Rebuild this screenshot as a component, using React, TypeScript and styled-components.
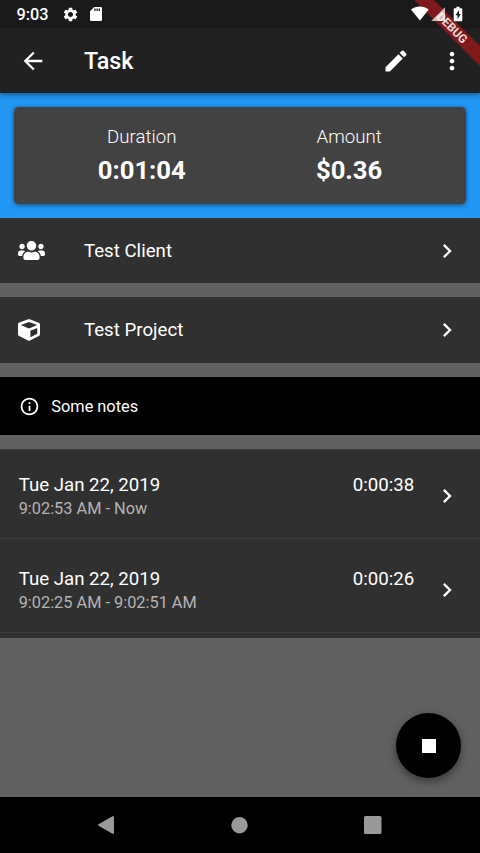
import React from "react";
import styled, { createGlobalStyle } from "styled-components";
import {
  MdArrowBack,
  MdChevronRight,
  MdEdit,
  MdInfoOutline,
  MdMoreVert,
  MdSettings,
} from "react-icons/md";
import { FaCube, FaUsers } from "react-icons/fa";

//#region STYLES
const GlobalStyle = createGlobalStyle`
  * {
    box-sizing: border-box;
  }
  body {
    margin: 0;
    font-family: Roboto, "Liberation Sans", sans-serif;
    color: #fff;
    background: #616161;
  }
  svg {
    display: block;
    flex-shrink: 0;
  }
  button {
    display: flex;
    padding: 0;
    border: 0;
    color: inherit;
    background: none;
  }
`;
const Screen = styled.div`
  position: relative;
  display: flex;
  flex-direction: column;
  width: 480px;
  height: 853px;
  overflow: hidden;
  background: #616161;
`;
const StatusBar = styled.div`
  display: flex;
  align-items: center;
  flex-shrink: 0;
  height: 28px;
  padding: 0 17px 0 16.5px;
  background: #1a1a1a;
`;
const Clock = styled.span`
  width: 45px;
  padding-top: 1px;
  font-size: 16.33px;
  font-weight: 500;
  line-height: 28px;
`;
const StatusIcons = styled.div<{ $right?: boolean }>`
  position: relative;
  z-index: 3;
  display: flex;
  align-items: center;
  gap: 11px;
  margin-left: ${({ $right }) => ($right ? "auto" : "0")};
`;
const AppBar = styled.header`
  position: relative;
  z-index: 1;
  display: flex;
  align-items: center;
  flex-shrink: 0;
  height: 65.33px;
  padding: 0 14px 0 18.67px;
  background: #212121;
  box-shadow: 0 2px 5px rgba(0, 0, 0, 0.4);
`;
const Title = styled.h1`
  flex: 1;
  margin: 0 0 0 37.33px;
  padding-top: 1px;
  font-size: 23.33px;
  font-weight: 500;
`;
const Actions = styled.div`
  display: flex;
  gap: 28px;
`;
const Summary = styled.section`
  flex-shrink: 0;
  height: 124.67px;
  padding: 14px;
  background: #2196f3;
`;
const Card = styled.div`
  display: flex;
  justify-content: space-around;
  height: 96.67px;
  padding: 18.67px;
  border-radius: 4.67px;
  background: #424242;
  box-shadow: 0 1px 4px rgba(0, 0, 0, 0.5);
`;
const Stat = styled.div`
  display: flex;
  flex-direction: column;
  align-items: center;
`;
const StatLabel = styled.span`
  font-size: 18.67px;
  font-weight: 300;
  line-height: 23px;
`;
const StatValue = styled.strong`
  margin-top: 5px;
  font-size: 25.67px;
  font-weight: 700;
  line-height: 32px;
`;
const Row = styled.div`
  display: flex;
  align-items: center;
  flex-shrink: 0;
  height: 65.33px;
  margin-bottom: 14px;
  padding: 0 18.67px 0 18px;
  font-size: 18.67px;
  background: #303030;
`;
const RowIcon = styled.span`
  width: 66px;
`;
const RowLabel = styled.span`
  flex: 1;
`;
const Notes = styled.div`
  display: flex;
  align-items: center;
  gap: 11.67px;
  flex-shrink: 0;
  height: 58.33px;
  margin-bottom: 14px;
  padding: 1px 18.67px 0;
  font-size: 16.33px;
  background: #000;
`;
const TimeList = styled.div`
  flex-shrink: 0;
  height: 188.67px;
  border-top: 1px solid #3a3a3a;
  background: #303030;
`;
const TimeItem = styled.div<{ $first?: boolean }>`
  display: flex;
  align-items: flex-start;
  height: ${({ $first }) => ($first ? "89px" : "94px")};
  padding: ${({ $first }) => ($first ? "24px" : "29px")} 18.67px 0;
  border-bottom: 1px solid #3c3c3c;
`;
const TimeText = styled.div`
  flex: 1;
`;
const TimeDate = styled.div`
  font-size: 18.67px;
  line-height: 22px;
`;
const TimeRange = styled.div`
  margin-top: 3.5px;
  font-size: 16.33px;
  line-height: 20px;
  color: #b4b4b4;
`;
const TimeTotal = styled.div`
  margin-right: 19.2px;
  font-size: 18.67px;
  line-height: 22px;
`;
const TimeArrow = styled.div`
  padding-top: 8px;
`;
const Fab = styled.button`
  position: absolute;
  right: 18.67px;
  bottom: 74.67px;
  align-items: center;
  justify-content: center;
  width: 65.33px;
  height: 65.33px;
  border-radius: 50%;
  background: #000;
  box-shadow: 0 4px 7px rgba(0, 0, 0, 0.32), 0 1px 14px rgba(0, 0, 0, 0.14);
`;
const StopIcon = styled.span`
  width: 14px;
  height: 14px;
  background: #fff;
`;
const NavBar = styled.nav`
  display: flex;
  align-items: center;
  justify-content: space-between;
  flex-shrink: 0;
  height: 56px;
  margin-top: auto;
  padding: 0 98.5px 0 97px;
  background: #000;
`;
const Banner = styled.div`
  position: absolute;
  z-index: 2;
  top: 21px;
  right: -28px;
  width: 112px;
  height: 14px;
  font-size: 11.9px;
  font-weight: 700;
  line-height: 14px;
  text-align: center;
  color: #e6dada;
  background: rgba(150, 24, 28, 0.82);
  transform: rotate(45deg);
`;
//#endregion

const times = [
  { date: "Tue Jan 22, 2019", range: "9:02:53 AM - Now", total: "0:00:38" },
  {
    date: "Tue Jan 22, 2019",
    range: "9:02:25 AM - 9:02:51 AM",
    total: "0:00:26",
  },
];

const SdIcon = () => (
  <svg width="12" height="14" viewBox="0 0 12 14">
    <path
      fill="#fff"
      fillRule="evenodd"
      d="M4.2 0H10.7a1.3 1.3 0 0 1 1.3 1.3V12.7a1.3 1.3 0 0 1-1.3 1.3H1.3A1.3 1.3 0 0 1 0 12.7V4.2ZM4.3 1.5V4H5.6V1.5ZM6.5 1.500V4H7.8V1.5ZM8.7 1.5V4H10V1.5Z"
    />
  </svg>
);

const SignalIcons = () => (
  <svg width="52" height="16" viewBox="0 0 52 16" fill="#fff">
    <path d="M0 3.4C5-.6 12.700-.6 17.700 3.400L8.900 14.500Z" />
    <path d="M34 1.200V15H20.200Z" fillOpacity="0.7" />
    <path
      fillRule="evenodd"
      d="M45.400.700h3.200v1.500h1.700a1 1 0 0 1 1 1V14.200a1 1 0 0 1-1 1h-6.600a1 1 0 0 1-1-1V3.200a1 1 0 0 1 1-1h1.700ZM48 4.100L44.500 9.300h2v3.900l3.200-5.300h-1.700Z"
    />
  </svg>
);

const App = () => {
  return (
    <>
      <GlobalStyle />
      <Screen>
        <StatusBar>
          <Clock>9:03</Clock>
          <StatusIcons>
            <MdSettings size={17} />
            <SdIcon />
          </StatusIcons>
          <StatusIcons $right>
            <SignalIcons />
          </StatusIcons>
        </StatusBar>
        <AppBar>
          <button type="button">
            <MdArrowBack size={28} />
          </button>
          <Title>Task</Title>
          <Actions>
            <button type="button">
              <MdEdit size={28} />
            </button>
            <button type="button">
              <MdMoreVert size={28} />
            </button>
          </Actions>
        </AppBar>
        <Summary>
          <Card>
            <Stat>
              <StatLabel>Duration</StatLabel>
              <StatValue>0:01:04</StatValue>
            </Stat>
            <Stat>
              <StatLabel>Amount</StatLabel>
              <StatValue>$0.36</StatValue>
            </Stat>
          </Card>
        </Summary>
        <Row>
          <RowIcon>
            <FaUsers size={27} />
          </RowIcon>
          <RowLabel>Test Client</RowLabel>
          <MdChevronRight size={28} />
        </Row>
        <Row>
          <RowIcon>
            <FaCube size={22} />
          </RowIcon>
          <RowLabel>Test Project</RowLabel>
          <MdChevronRight size={28} />
        </Row>
        <Notes>
          <MdInfoOutline size={21} />
          Some notes
        </Notes>
        <TimeList>
          {times.map((time, index) => (
            <TimeItem key={time.range} $first={index === 0}>
              <TimeText>
                <TimeDate>{time.date}</TimeDate>
                <TimeRange>{time.range}</TimeRange>
              </TimeText>
              <TimeTotal>{time.total}</TimeTotal>
              <TimeArrow>
                <MdChevronRight size={28} />
              </TimeArrow>
            </TimeItem>
          ))}
        </TimeList>
        <NavBar>
          <svg width="19" height="20" viewBox="0 0 19 20">
            <path
              d="M16 2V18L2 10Z"
              fill="#999"
              stroke="#999"
              strokeWidth="2"
              strokeLinejoin="round"
            />
          </svg>
          <svg width="17" height="17" viewBox="0 0 17 17">
            <circle cx="8.5" cy="8.3" r="8.2" fill="#999" />
          </svg>
          <svg width="18" height="18" viewBox="0 0 18 18">
            <rect width="17.5" height="18" rx="1.5" fill="#999" />
          </svg>
        </NavBar>
        <Fab type="button">
          <StopIcon />
        </Fab>
        <Banner>DEBUG</Banner>
      </Screen>
    </>
  );
};

export default App;
